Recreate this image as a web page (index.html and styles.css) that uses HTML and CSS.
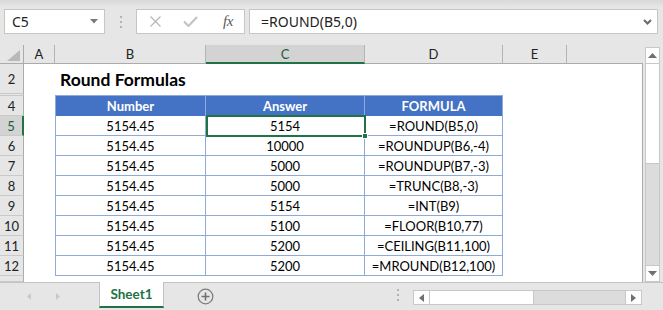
FILE: index.html
```html
<!DOCTYPE html>
<html>
<head>
<meta charset="utf-8">
<link rel="stylesheet" href="styles.css">
</head>
<body>
<div class="toolbar">
  <div class="namebox"><span>C5</span>
    <svg width="8" height="5" viewBox="0 0 8 5"><path d="M0 0H8L4 4.5Z" fill="#7a7a7a"/></svg>
  </div>
  <div class="grip"><i></i><i></i><i></i></div>
  <div class="fxbox">
    <svg class="ico-x" width="11" height="11" viewBox="0 0 11 11"><path d="M0.5 0.5L10.5 10.5M10.5 0.5L0.5 10.5" stroke="#b8b8b8" stroke-width="1.3"/></svg>
    <svg class="ico-ok" width="15" height="11" viewBox="0 0 15 11"><path d="M1 5.5L5.5 10L14 1" stroke="#c4c4c4" stroke-width="2.2" fill="none"/></svg>
    <span class="fx">fx</span>
  </div>
  <div class="formula"><span>=ROUND(B5,0)</span>
    <svg width="9" height="6" viewBox="0 0 9 6"><path d="M1 1L4.5 4.5L8 1" stroke="#6a6a6a" stroke-width="2" fill="none"/></svg>
  </div>
</div>

<div class="main">
  <div class="sheet">
    <!-- header row -->
    <div class="corner"><svg width="13" height="11" viewBox="0 0 13 11"><path d="M13 0V11H0Z" fill="#b9b9b9"/></svg></div>
    <div class="ch">A</div>
    <div class="ch">B</div>
    <div class="ch sel">C</div>
    <div class="ch">D</div>
    <div class="ch">E</div>
    <div class="ch last"></div>

    <!-- row 2 -->
    <div class="rh">2</div>
    <div class="c"></div>
    <div class="c title">Round Formulas</div>
    <div class="c"></div>
    <div class="c"></div>
    <div class="c"></div>
    <div class="c end"></div>

    <!-- row 3 (hidden) -->
    <div class="rh"></div>
    <div class="c"></div>
    <div class="c"></div>
    <div class="c"></div>
    <div class="c"></div>
    <div class="c"></div>
    <div class="c end"></div>

    <!-- row 4 -->
    <div class="rh">4</div>
    <div class="c"></div>
    <div class="th first">Number</div>
    <div class="th">Answer</div>
    <div class="th">FORMULA</div>
    <div class="c"></div>
    <div class="c end"></div>

    <!-- row 5 -->
    <div class="rh sel">5</div>
    <div class="c"></div>
    <div class="td first">5154.45</div>
    <div class="td active">5154<span class="cursor"><b></b></span></div>
    <div class="td">=ROUND(B5,0)</div>
    <div class="c"></div>
    <div class="c end"></div>

    <!-- row 6 -->
    <div class="rh">6</div>
    <div class="c"></div>
    <div class="td first">5154.45</div>
    <div class="td">10000</div>
    <div class="td">=ROUNDUP(B6,-4)</div>
    <div class="c"></div>
    <div class="c end"></div>

    <!-- row 7 -->
    <div class="rh">7</div>
    <div class="c"></div>
    <div class="td first">5154.45</div>
    <div class="td">5000</div>
    <div class="td">=ROUNDUP(B7,-3)</div>
    <div class="c"></div>
    <div class="c end"></div>

    <!-- row 8 -->
    <div class="rh">8</div>
    <div class="c"></div>
    <div class="td first">5154.45</div>
    <div class="td">5000</div>
    <div class="td">=TRUNC(B8,-3)</div>
    <div class="c"></div>
    <div class="c end"></div>

    <!-- row 9 -->
    <div class="rh">9</div>
    <div class="c"></div>
    <div class="td first">5154.45</div>
    <div class="td">5154</div>
    <div class="td">=INT(B9)</div>
    <div class="c"></div>
    <div class="c end"></div>

    <!-- row 10 -->
    <div class="rh">10</div>
    <div class="c"></div>
    <div class="td first">5154.45</div>
    <div class="td">5100</div>
    <div class="td">=FLOOR(B10,77)</div>
    <div class="c"></div>
    <div class="c end"></div>

    <!-- row 11 -->
    <div class="rh">11</div>
    <div class="c"></div>
    <div class="td first">5154.45</div>
    <div class="td">5200</div>
    <div class="td">=CEILING(B11,100)</div>
    <div class="c"></div>
    <div class="c end"></div>

    <!-- row 12 -->
    <div class="rh">12</div>
    <div class="c"></div>
    <div class="td first">5154.45</div>
    <div class="td">5200</div>
    <div class="td">=MROUND(B12,100)</div>
    <div class="c"></div>
    <div class="c end"></div>

    <!-- partial row 13 -->
    <div class="rh"></div>
    <div class="c"></div>
    <div class="c"></div>
    <div class="c"></div>
    <div class="c"></div>
    <div class="c"></div>
    <div class="c end"></div>
  </div>

  <div class="vscroll">
    <div class="sbtn"><svg width="9" height="5" viewBox="0 0 9 5"><path d="M0 5H9L4.5 0Z" fill="#6f6f6f"/></svg></div>
    <div class="vthumb"></div>
    <div class="vtrack"></div>
    <div class="sbtn"><svg width="9" height="5" viewBox="0 0 9 5"><path d="M0 0H9L4.5 5Z" fill="#6f6f6f"/></svg></div>
  </div>
</div>

<div class="tabbar">
  <div class="nav">
    <svg width="4" height="7" viewBox="0 0 4 7"><path d="M4 0V7L0 3.5Z" fill="#c9c9c9"/></svg>
    <svg width="4" height="7" viewBox="0 0 4 7"><path d="M0 0V7L4 3.5Z" fill="#c9c9c9"/></svg>
  </div>
  <div class="tab">Sheet1</div>
  <div class="add"><svg width="17" height="17" viewBox="0 0 17 17"><circle cx="8.5" cy="8.5" r="7.3" fill="none" stroke="#7d7d7d" stroke-width="1.3"/><path d="M8.5 4.5V12.5M4.5 8.5H12.5" stroke="#6f6f6f" stroke-width="1.6"/></svg></div>
  <div class="hgrip"><i></i><i></i><i></i></div>
  <div class="hscroll">
    <div class="hbtn"><svg width="5" height="8" viewBox="0 0 5 8"><path d="M5 0V8L0 4Z" fill="#6f6f6f"/></svg></div>
    <div class="hthumb"></div>
    <div class="htrack"></div>
    <div class="hbtn right"><svg width="5" height="8" viewBox="0 0 5 8"><path d="M0 0V8L5 4Z" fill="#6f6f6f"/></svg></div>
  </div>
</div>
</body>
</html>
```

FILE: styles.css
```css
* { box-sizing: border-box; }

body {
  margin: 0;
  width: 663px;
  height: 310px;
  overflow: hidden;
  background: #e6e6e6;
  font-family: Lato, "Open Sans", sans-serif;
  color: #1e1e1e;
}

/* ---------- formula bar ---------- */
.toolbar {
  height: 45px;
  display: flex;
  align-items: flex-start;
  padding: 9px 0 0 4px;
  background: linear-gradient(#d9d9d9, #e6e6e6 7px);
}

.namebox {
  width: 101px;
  height: 25px;
  background: #fff;
  border: 1px solid #c6c6c6;
  display: flex;
  align-items: center;
  justify-content: space-between;
  padding: 0 6px 0 7px;
  font-family: "Noto Sans", sans-serif;
  font-size: 14px;
  color: #222;
}

.grip {
  width: 31px;
  display: flex;
  flex-direction: column;
  align-items: center;
  gap: 3px;
  padding-top: 7px;
}
.grip i, .hgrip i {
  display: block;
  width: 2px;
  height: 2px;
  background: #b3b3b3;
}

.fxbox {
  width: 109px;
  height: 25px;
  background: #fff;
  border: 1px solid #c6c6c6;
  display: flex;
  align-items: center;
  padding-left: 13px;
}
.ico-ok { margin-left: 22px; }
.fx {
  margin-left: 25px;
  font-family: "Liberation Serif", serif;
  font-style: italic;
  font-size: 15px;
  color: #5a5a5a;
  letter-spacing: -0.5px;
}

.formula {
  margin-left: 4px;
  width: 409px;
  height: 25px;
  background: #fff;
  border: 1px solid #c6c6c6;
  display: flex;
  align-items: center;
  justify-content: space-between;
  padding: 0 5px 0 11px;
  font-family: "Noto Sans", sans-serif;
  font-size: 14px;
  color: #222;
}

/* ---------- sheet ---------- */
.main {
  display: flex;
  height: 237px;
}

.sheet {
  width: 643px;
  display: grid;
  grid-template-columns: 24px 31px 151px 159px 138px 64px 76px;
  grid-template-rows: 19px 30px 2px repeat(9, 20px) 6px;
  font-size: 13px;
}

.corner {
  background: #e6e6e6;
  border-right: 1px solid #ababab;
  border-bottom: 1px solid #ababab;
  display: flex;
  align-items: flex-end;
  justify-content: flex-end;
  padding: 0 3px 2px 0;
}

.ch {
  background: #e6e6e6;
  border-right: 1px solid #b4b4b4;
  border-bottom: 1px solid #ababab;
  display: flex;
  align-items: center;
  justify-content: center;
  font-size: 13px;
  color: #222;
}
.ch.sel {
  background: #d3d3d3;
  border-bottom: 2px solid #217346;
  color: #1b5e3a;
}
.ch.last { border-right: none; }

.rh {
  background: #e6e6e6;
  border-right: 1px solid #ababab;
  border-bottom: 1px solid #c9c9c9;
  display: flex;
  align-items: center;
  justify-content: center;
  font-size: 13px;
  color: #222;
}
.rh.sel {
  background: #d3d3d3;
  border-right: 2px solid #217346;
  color: #1b5e3a;
}

.c { background: #fff; }
.c.end { border-right: 1px solid #ababab; }

.title {
  white-space: nowrap;
  overflow: visible;
  font-weight: bold;
  font-size: 17.5px;
  padding-left: 5px;
  display: flex;
  align-items: center;
  color: #000;
}

.th {
  background: #4472c4;
  color: #fff;
  font-weight: bold;
  border-right: 1px solid #8eaadb;
  box-shadow: 0 -1px 0 #8eaadb;
  display: flex;
  align-items: center;
  justify-content: center;
}
.th.first { border-left: 1px solid #8eaadb; }

.td {
  background: #fff;
  border-right: 1px solid #8eaadb;
  border-bottom: 1px solid #8eaadb;
  display: flex;
  align-items: center;
  justify-content: center;
  color: #000;
}
.td.first { border-left: 1px solid #8eaadb; }

.td.active { position: relative; }
.cursor {
  position: absolute;
  left: 0;
  top: -1px;
  right: -2px;
  bottom: -2px;
  border: 2px solid #217346;
}
.cursor b {
  position: absolute;
  right: -4px;
  bottom: -4px;
  width: 6px;
  height: 6px;
  background: #217346;
  border: 1px solid #fff;
}

/* vertical scrollbar */
.vscroll {
  margin: 2px 0 0 2px;
  width: 15px;
  height: 235px;
  display: flex;
  flex-direction: column;
  background: #dcdcdc;
  border: 1px solid #c8c8c8;
}
.sbtn {
  height: 15px;
  background: #fdfdfd;
  display: flex;
  align-items: center;
  justify-content: center;
  flex: none;
}
.vthumb {
  height: 101px;
  background: #fff;
  border-top: 1px solid #c8c8c8;
  border-bottom: 1px solid #c8c8c8;
  flex: none;
}
.vtrack { flex: 1; border-bottom: 1px solid #c8c8c8; }

/* ---------- tab bar ---------- */
.tabbar {
  height: 28px;
  border-top: 1px solid #c3c3c3;
  display: flex;
  align-items: flex-start;
}

.nav {
  width: 99px;
  height: 27px;
  display: flex;
  align-items: center;
  padding-left: 27px;
  gap: 25px;
}

.tab {
  width: 65px;
  height: 26px;
  margin-top: -1px;
  background: #fff;
  border-left: 1px solid #c3c3c3;
  border-right: 1px solid #c3c3c3;
  border-bottom: 2px solid #217346;
  display: flex;
  align-items: center;
  justify-content: center;
  font-weight: bold;
  font-size: 13.5px;
  color: #217346;
}

.add {
  margin: 5px 0 0 33px;
  width: 17px;
  height: 17px;
}

.hgrip {
  margin: 6px 0 0 183px;
  display: flex;
  flex-direction: column;
  gap: 3px;
}

.hscroll {
  margin: 7px 0 0 14px;
  width: 229px;
  height: 15px;
  display: flex;
  border: 1px solid #c8c8c8;
  background: #dcdcdc;
}
.hbtn {
  width: 15px;
  background: #fdfdfd;
  display: flex;
  align-items: center;
  justify-content: center;
  flex: none;
}
.hthumb {
  width: 105px;
  background: #fff;
  border-left: 1px solid #c8c8c8;
  border-right: 1px solid #c8c8c8;
  flex: none;
}
.htrack { flex: 1; border-right: 1px solid #c8c8c8; }
```
